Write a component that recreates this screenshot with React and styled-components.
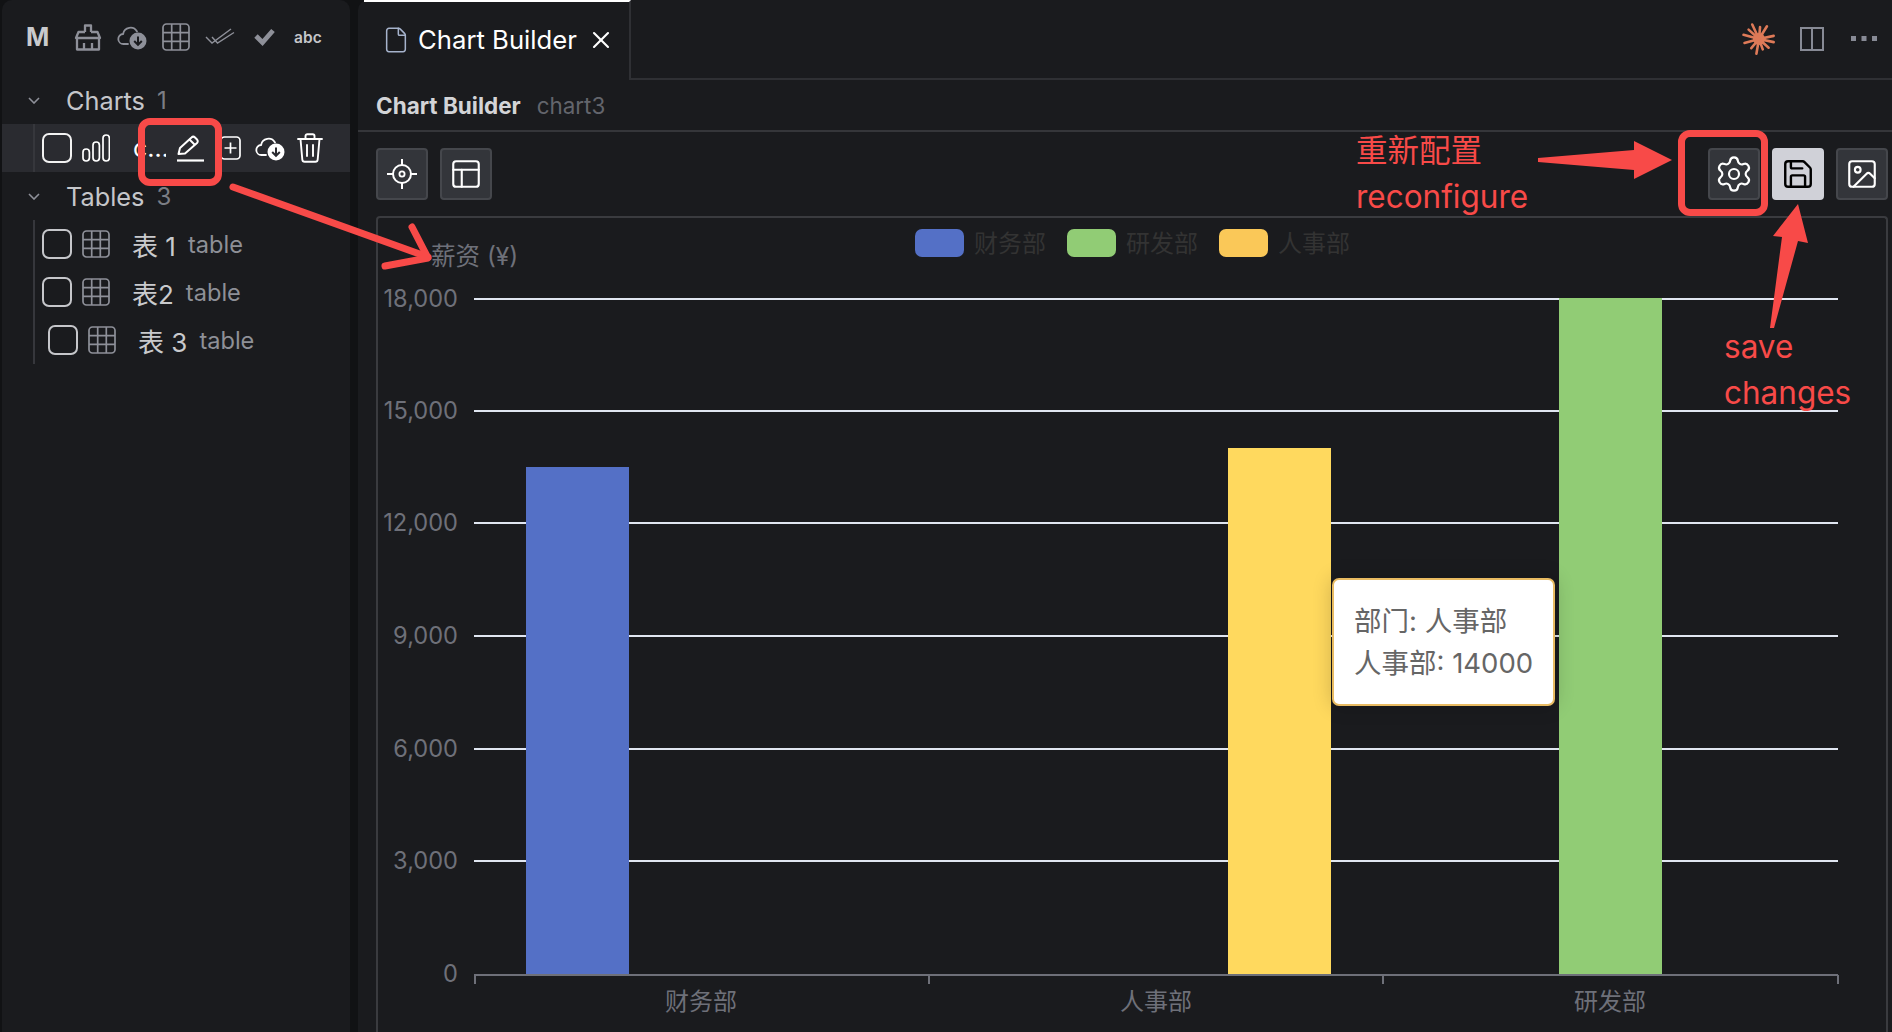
import React from 'react';
import styled, { createGlobalStyle } from 'styled-components';
import { File, X, Settings, Save, Image as ImageIcon, PanelsTopLeft } from 'lucide-react';

const FONT = `Inter, "Noto Sans CJK SC", sans-serif`;

const Global = createGlobalStyle`
  html, body { margin: 0; padding: 0; height: 100%; background: #111214; overflow: hidden; }
  body { font-family: ${FONT}; }
  #root { height: 100%; }
  * { box-sizing: border-box; }
`;

const Page = styled.div`
  position: relative; display: flex; height: 1032px; width: 1892px; overflow: hidden;
  padding-left: 2px; gap: 8px; background: #111214;
`;
const Sidebar = styled.aside`
  width: 348px; flex: none; background: #1a1b1e; border-radius: 10px 10px 0 0; color: #c5c6ca;
`;
const SideToolbar = styled.div`
  height: 76px; display: flex; align-items: center; padding-left: 24px; padding-bottom: 2px;
`;
const Logo = styled.span`
  width: 40px; font-size: 25px; font-weight: 700; color: #c9cacd;
`;
const ToolIcon = styled.span`
  width: 44px; display: flex; justify-content: center; align-items: center; color: #8e9099;
`;
const Abc = styled.span`
  font-size: 15.5px; font-weight: 600; color: #c5c6ca; letter-spacing: .2px;
`;
const SectionHead = styled.div`
  height: 48px; display: flex; align-items: center; padding-left: 26px;
`;
const Chevron = styled.svg`
  width: 12px; height: 7px; margin-right: 26px; flex: none;
`;
const SectionTitle = styled.span`
  font-size: 25.3px; color: #c5c6ca;
`;
const Count = styled.span`
  font-size: 24px; color: #7c7e85; margin-left: 12px;
`;
const Row = styled.div`
  height: 48px; padding-left: 31px; background: ${p => (p.$active ? '#2a2b30' : 'transparent')};
`;
const RowInner = styled.div`
  height: 100%; display: flex; align-items: center; border-left: 2px solid #36373c;
  padding-left: ${p => 7 + (p.$shift || 0)}px; color: ${p => (p.$active ? '#fff' : '#c5c6ca')};
`;
const Check = styled.span`
  width: 30px; height: 30px; flex: none; border-radius: 7px;
  border: 2px solid ${p => (p.$active ? '#f2f2f2' : '#c5c6ca')}; margin-right: 10px;
`;
const TypeIcon = styled.span`
  width: 28px; height: 28px; flex: none; display: flex; margin-right: ${p => (p.$active ? 23 : 22)}px;
  color: ${p => (p.$active ? '#fff' : '#8e9099')};
`;
const Label = styled.span`
  font-size: 26px; color: #c9cacd; white-space: pre;
`;
const TruncLabel = styled.span`
  width: 33px; font-size: 25px; color: #fff; overflow: hidden; text-overflow: ellipsis;
  white-space: nowrap; margin-right: 4px; flex: none;
`;
const Kind = styled.span`
  font-size: 23.6px; color: #8e9097; margin-left: 12px; padding-top: 1px;
`;
const RowAction = styled.span`
  width: 40px; flex: none; display: flex; justify-content: center; color: #fff;
`;

const Main = styled.main`
  flex: 1; min-width: 0; display: flex; flex-direction: column; background: #1a1b1e;
  border-radius: 10px 0 0 0;
`;
const TabBar = styled.div`
  height: 80px; flex: none; display: flex; padding-left: 6px;
`;
const Tab = styled.div`
  width: 267px; height: 80px; display: flex; align-items: center; padding-left: 18px; padding-bottom: 3px;
  border-top: 2px solid #fff; border-right: 2px solid #2f3034; color: #fff;
`;
const TabTitle = styled.span`
  font-size: 25.7px; margin-left: 8px; margin-right: 10px; white-space: nowrap;
`;
const TabFill = styled.div`
  flex: 1; display: flex; align-items: center; justify-content: flex-end; height: 80px;
  border-bottom: 2px solid #2f3034; padding: 0 15px 0 0; gap: 24px;
`;
const DotsSlot = styled.span`
  display: flex; margin-left: 3px;
`;
const Crumbs = styled.div`
  height: 52px; flex: none; display: flex; align-items: center; padding-left: 18px;
  border-bottom: 2px solid #35363a;
`;
const CrumbStrong = styled.span`
  font-size: 22.5px; font-weight: 700; color: #d3d4d7;
`;
const CrumbSoft = styled.span`
  font-size: 22.4px; color: #63656c; margin-left: 16px;
`;
const Toolbar = styled.div`
  height: 84px; flex: none; display: flex; justify-content: space-between; padding: 16px 4px 16px 18px;
`;
const ButtonGroup = styled.div`
  display: flex; gap: 12px;
`;
const ToolButton = styled.button`
  width: 52px; height: 52px; padding: 0; display: flex; align-items: center; justify-content: center;
  border-radius: 4px; border: 2px solid ${p => (p.$primary ? '#d0d1d8' : '#45474c')};
  background: ${p => (p.$primary ? '#d0d1d8' : '#33353a')}; color: ${p => (p.$primary ? '#000' : '#fff')};
`;
const ChartPanel = styled.section`
  position: relative; flex: 1; margin: 0 4px 0 18px; border: 2px solid #3a3b3f; border-bottom: none;
  border-radius: 4px 4px 0 0; overflow: hidden;
`;
const ChartSvg = styled.svg`
  display: block; width: 1510px; height: 814px;
`;
const Tooltip = styled.div`
  position: absolute; left: 954px; top: 360px; width: 223px; height: 128px;
  background: #fff; border: 2px solid #e8bb62; border-radius: 7px; padding: 20px 0 0 20px;
  box-shadow: 0 0 20px rgba(0,0,0,.2); color: #666; font-size: 27.5px; line-height: 42px; white-space: nowrap;
`;
const Overlay = styled.svg`
  position: absolute; left: 0; top: 0; width: 1892px; height: 1032px; pointer-events: none;
`;
const Callout = styled.div`
  position: absolute; left: ${p => p.$x}px; top: ${p => p.$y}px; width: ${p => p.$w}px; height: ${p => p.$h}px;
  border: 7px solid #f84a48; border-radius: 12px; pointer-events: none;
`;
const Note = styled.span`
  position: absolute; left: ${p => p.$x}px; top: ${p => p.$y}px; transform: translateY(-50%);
  font-size: 31.5px; color: #f84a48; white-space: nowrap; line-height: 1;
`;

const Bars = () => (
  <svg width="28" height="28" viewBox="0 0 28 28" fill="none" stroke="currentColor" strokeWidth="1.7">
    <rect x="1" y="15" width="6.4" height="12" rx="3.2" /><rect x="11" y="8" width="6.4" height="19" rx="3.2" /><rect x="21" y="1" width="6.4" height="26" rx="3.2" />
  </svg>
);
const Grid = ({ s = 28 }) => (
  <svg width={s} height={s} viewBox="0 0 28 28" fill="none" stroke="currentColor" strokeWidth="1.7">
    <rect x="1" y="1" width="26" height="26" rx="3.5" />
    <path d="M9.7 1v26M18.3 1v26M1 9.7h26M1 18.3h26" />
  </svg>
);
const CloudDown = ({ hole = '#1a1b1e' }) => (
  <svg width="30" height="26" viewBox="0 0 30 26" fill="none" stroke="currentColor" strokeWidth="1.8">
    <path d="M11 20H6.500a5 5 0 0 1-.4-10A7.500 7.500 0 0 1 20 7.500" strokeLinecap="round" />
    <circle cx="21" cy="17" r="8.500" fill="currentColor" stroke="none" />
    <path d="M21 12.500v8M17.200 17l3.800 3.800 3.800-3.800" stroke={hole} strokeWidth="2" />
  </svg>
);
const Broom = () => (
  <svg width="28" height="27" viewBox="0 0 28 27" fill="none" stroke="currentColor" strokeWidth="2.300" strokeLinejoin="round">
    <path d="M11 8V1.500h6V8" /><path d="M11 8H4.500L2 14h24l-2.500-6H17" /><path d="M3 14v11.500h22V14" /><path d="M10 19v6.500M18 19v6.500" />
  </svg>
);
const DoubleCheck = () => (
  <svg width="30" height="18" viewBox="0 0 30 18" fill="none" stroke="currentColor" strokeWidth="1.400">
    <path d="M1 9l6 6L26 1" /><path d="M7 9l5.500 6L29 4.500" />
  </svg>
);
const Tick = () => (
  <svg width="21" height="18" viewBox="0 0 21 18" fill="none" stroke="currentColor" strokeWidth="4.800">
    <path d="M2 8l6.500 6.500L19 2.500" />
  </svg>
);
const Pencil = () => (
  <svg width="27" height="27" viewBox="0 0 27 27" fill="none" stroke="currentColor" strokeWidth="2" strokeLinejoin="round">
    <path d="M1.500 19l1.500-6L14.500 2.500c1-1 2.500-1 3.500 0l2 2c1 1 1 2.500 0 3.500L8 18.500z" />
    <path d="M12.500 4.500l5.500 5.500" /><path d="M0 25.500h27" strokeWidth="2.200" />
  </svg>
);
const PlusBox = () => (
  <svg width="21" height="24" viewBox="0 0 21 24" fill="none" stroke="currentColor" strokeWidth="1.700">
    <rect x="1" y="1" width="19" height="22" rx="3.500" /><path d="M10.500 6.500v11M4.500 12h12" />
  </svg>
);
const Bin = () => (
  <svg width="26" height="30" viewBox="0 0 26 30" fill="none" stroke="currentColor" strokeWidth="1.900" strokeLinecap="round" strokeLinejoin="round">
    <path d="M1 6h24" /><path d="M8.500 6V3c0-1 .8-1.800 1.800-1.800h5.400c1 0 1.800.8 1.800 1.800v3" />
    <path d="M3.500 6l1.800 20.500c.1 1.300 1.100 2.300 2.400 2.300h10.600c1.300 0 2.300-1 2.400-2.300L22.500 6" />
    <path d="M10 12v11M16 12v11" />
  </svg>
);
const Target = () => (
  <svg width="30" height="30" viewBox="0 0 30 30" fill="none" stroke="currentColor" strokeWidth="2">
    <circle cx="15" cy="15" r="9" /><circle cx="15" cy="15" r="2.600" strokeWidth="1.800" />
    <path d="M15 0v6M15 24v6M0 15h6M24 15h6" />
  </svg>
);
const SplitView = () => (
  <svg width="24" height="24" viewBox="0 0 24 24" fill="none" stroke="#878a95" strokeWidth="2">
    <path d="M1 1h22v22H1zM12 1v22" />
  </svg>
);
const MoreDots = () => (
  <svg width="26" height="6" viewBox="0 0 26 6" fill="#878a95">
    <rect x="0" y="0" width="5" height="5" /><rect x="10.500" y="0" width="5" height="5" /><rect x="21" y="0" width="5" height="5" />
  </svg>
);
const Spark = () => {
  const rays = [[-115, 16], [-85, 12], [-58, 15], [-12, 15], [12, 15], [42, 13], [70, 11], [100, 15], [130, 12], [165, 15], [195, 16], [222, 14]];
  return (
    <svg width="34" height="34" viewBox="-17 -17 34 34" stroke="#de7a58" strokeWidth="2.600" strokeLinecap="round">
      <circle r="6" fill="#de7a58" stroke="none" />
      {rays.map(([deg, r]) => {
        const a = (deg * Math.PI) / 180;
        return <line key={deg} x1="0" y1="0" x2={Math.cos(a) * r} y2={Math.sin(a) * r} />;
      })}
    </svg>
  );
};
const Down = () => (
  <Chevron viewBox="0 0 12 7" fill="none" stroke="#8e9099" strokeWidth="1.600"><path d="M1 1l5 5 5-5" /></Chevron>
);

const TableRow = ({ name, shift }) => (
  <Row>
    <RowInner $shift={shift}>
      <Check />
      <TypeIcon><Grid /></TypeIcon>
      <Label>{name}</Label>
      <Kind>table</Kind>
    </RowInner>
  </Row>
);

const X0 = 378, Y0 = 218;
const ticks = [
  ['18,000', 299], ['15,000', 411], ['12,000', 523], ['9,000', 636], ['6,000', 749], ['3,000', 861], ['0', 974],
];
const bars = [
  { x: 526, top: 467, c: '#5470c6' },
  { x: 1228, top: 448, c: '#ffd95e' },
  { x: 1559, top: 298, c: '#91cc75' },
];
const legend = [
  { x: 915, c: '#5470c6', t: '财务部' },
  { x: 1067, c: '#91cc75', t: '研发部' },
  { x: 1219, c: '#fac858', t: '人事部' },
];
const AXIS = '#6e7079';

const Chart = () => (
  <ChartSvg viewBox={`${X0} ${Y0} 1510 814`} fontFamily={FONT}>
    {ticks.slice(0, 6).map(([, y]) => <line key={y} x1="474" x2="1838" y1={y} y2={y} stroke="#e0e6f1" strokeWidth="2" />)}
    {bars.map(b => <rect key={b.x} x={b.x} y={b.top} width="103" height={974 - b.top} fill={b.c} />)}
    <line x1="474" x2="1838" y1="975" y2="975" stroke={AXIS} strokeWidth="2" />
    {[475, 929, 1383, 1838].map(x => <line key={x} x1={x} x2={x} y1="975" y2="984" stroke={AXIS} strokeWidth="2" />)}
    {ticks.map(([t, y]) => <text key={t} x="458" y={y + 8} textAnchor="end" fontSize="23.600" fill={AXIS}>{t}</text>)}
    {[['财务部', 701], ['人事部', 1156], ['研发部', 1610]].map(([t, x]) => (
      <text key={t} x={x} y="1010" textAnchor="middle" fontSize="24" fill={AXIS}>{t}</text>
    ))}
    <text x="431" y="265" fontSize="24.500" fill={AXIS}>薪资 (¥)</text>
    {legend.map(l => (
      <g key={l.t}>
        <rect x={l.x} y="229" width="49" height="28" rx="7" fill={l.c} />
        <text x={l.x + 59} y="252" fontSize="24" fill="#333">{l.t}</text>
      </g>
    ))}
  </ChartSvg>
);

export default function App() {
  return (
    <Page>
      <Global />
      <Sidebar>
        <SideToolbar>
          <Logo>M</Logo>
          <ToolIcon><Broom /></ToolIcon>
          <ToolIcon><CloudDown /></ToolIcon>
          <ToolIcon><Grid /></ToolIcon>
          <ToolIcon><DoubleCheck /></ToolIcon>
          <ToolIcon><Tick /></ToolIcon>
          <ToolIcon><Abc>abc</Abc></ToolIcon>
        </SideToolbar>
        <SectionHead><Down /><SectionTitle>Charts</SectionTitle><Count>1</Count></SectionHead>
        <Row $active>
          <RowInner $active>
            <Check $active />
            <TypeIcon $active><Bars /></TypeIcon>
            <TruncLabel>chart3</TruncLabel>
            <RowAction><Pencil /></RowAction>
            <RowAction><PlusBox /></RowAction>
            <RowAction><CloudDown hole="#2a2b30" /></RowAction>
            <RowAction><Bin /></RowAction>
          </RowInner>
        </Row>
        <SectionHead><Down /><SectionTitle>Tables</SectionTitle><Count>3</Count></SectionHead>
        <TableRow name="表 1" />
        <TableRow name="表2" />
        <TableRow name="表 3" shift={6} />
      </Sidebar>
      <Main>
        <TabBar>
          <Tab>
            <File size={28} strokeWidth={1.300} color="#a6b3cc" />
            <TabTitle>Chart Builder</TabTitle>
            <X size={28} strokeWidth={1.800} />
          </Tab>
          <TabFill>
            <Spark />
            <SplitView />
            <DotsSlot><MoreDots /></DotsSlot>
          </TabFill>
        </TabBar>
        <Crumbs>
          <CrumbStrong>Chart Builder</CrumbStrong>
          <CrumbSoft>chart3</CrumbSoft>
        </Crumbs>
        <Toolbar>
          <ButtonGroup>
            <ToolButton><Target /></ToolButton>
            <ToolButton><PanelsTopLeft size={34} strokeWidth={1.500} /></ToolButton>
          </ButtonGroup>
          <ButtonGroup>
            <ToolButton><Settings size={40} strokeWidth={1.300} /></ToolButton>
            <ToolButton $primary><Save size={34} strokeWidth={1.700} /></ToolButton>
            <ToolButton><ImageIcon size={34} strokeWidth={1.500} /></ToolButton>
          </ButtonGroup>
        </Toolbar>
        <ChartPanel>
          <Chart />
          <Tooltip>部门: 人事部<br />人事部: 14000</Tooltip>
        </ChartPanel>
      </Main>

      <Overlay viewBox="0 0 1892 1032">
        <g fill="#f84a48">
          <polygon points="1538,158 1634,150 1634,141 1672,160 1634,179 1634,170 1538,162" />
          <polygon points="1770,328 1782,237 1773,236 1798,204 1808,243 1798,241 1774,328" />
        </g>
        <g fill="none" stroke="#f84a48" strokeWidth="7" strokeLinecap="round" strokeLinejoin="round">
          <path d="M233 187L428 257" />
          <path d="M412 227L428 258L385 266" />
        </g>
      </Overlay>
      <Callout $x={138} $y={118} $w={84} $h={68} />
      <Callout $x={1678} $y={130} $w={90} $h={86} />
      <Note $x={1356} $y={151}>重新配置</Note>
      <Note $x={1356} $y={197}>reconfigure</Note>
      <Note $x={1724} $y={347}>save</Note>
      <Note $x={1724} $y={393}>changes</Note>
    </Page>
  );
}
